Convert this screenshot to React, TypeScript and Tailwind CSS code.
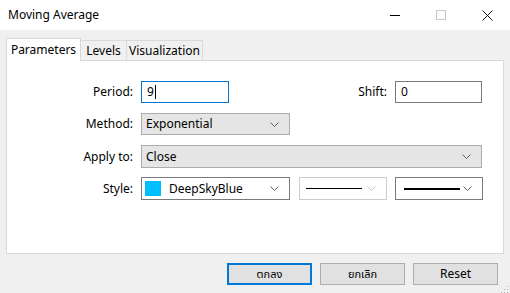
import React from "react";

const font = { fontFamily: '"Segoe UI", "Noto Sans", "Noto Sans Thai", "Liberation Sans", sans-serif' };

function Chevron({ light = false }: { light?: boolean }) {
  return (
    <svg width="9" height="5" viewBox="0 0 9 5" className="shrink-0">
      <path d="M0.5 0.5 L4.5 4.5 L8.5 0.5" fill="none" stroke={light ? "#c4c4c4" : "#606060"} strokeWidth="1" />
    </svg>
  );
}

function Label({ text, w }: { text: string; w: string }) {
  return <div className={`${w} shrink-0 text-right pr-[8px]`}>{text}</div>;
}

export default function App() {
  return (
    <div style={font} className="w-[510px] h-[293px] flex flex-col bg-[#f0f0f0] text-[12px] text-black overflow-hidden">
      {/* title bar */}
      <div className="h-[30px] bg-white flex items-center justify-between shrink-0">
        <span className="pl-[8px] text-[12px]">Moving Average</span>
        <div className="flex items-center h-full">
          <div className="w-[46px] h-full flex items-center justify-center">
            <div className="w-[10px] h-px bg-black" />
          </div>
          <div className="w-[46px] h-full flex items-center justify-center">
            <div className="w-[10px] h-[10px] border border-[#c8c8c8]" />
          </div>
          <div className="w-[46px] h-full flex items-center justify-center">
            <svg width="11" height="11" viewBox="0 0 11 11">
              <path d="M0.5 0.5 L10.5 10.5 M10.5 0.5 L0.5 10.5" stroke="#111" strokeWidth="1" />
            </svg>
          </div>
        </div>
      </div>

      {/* tabs */}
      <div className="pl-[6px] pt-[8px] flex items-end h-[30px] shrink-0">
        <div className="h-[23px] w-[75px] bg-white border border-b-0 border-[#d9d9d9] flex items-center justify-center relative z-10 -mb-px">
          Parameters
        </div>
        <div className="h-[20px] w-[46px] bg-[#f0f0f0] border border-b-0 border-l-0 border-[#d9d9d9] flex items-center justify-center">
          Levels
        </div>
        <div className="h-[20px] w-[76px] bg-[#f0f0f0] border border-b-0 border-l-0 border-[#d9d9d9] flex items-center justify-center">
          Visualization
        </div>
      </div>

      {/* panel */}
      <div className="ml-[6px] w-[498px] h-[194px] bg-white border border-[#d9d9d9] shrink-0 pt-[20px] flex flex-col gap-[10px]">
        <div className="flex items-center h-[22px]">
          <Label text="Period:" w="w-[134px]" />
          <div className="w-[88px] h-[22px] border border-[#0078d7] flex items-center pl-[5px]">
            9<span className="w-px h-[14px] bg-black ml-px" />
          </div>
          <Label text="Shift:" w="w-[166px]" />
          <div className="w-[87px] h-[22px] border border-[#7a7a7a] flex items-center pl-[5px]">0</div>
        </div>

        <div className="flex items-center h-[22px]">
          <Label text="Method:" w="w-[134px]" />
          <div className="w-[149px] h-[22px] bg-[#e5e5e5] border border-[#acacac] flex items-center justify-between pl-[4px] pr-[10px]">
            <span>Exponential</span>
            <Chevron />
          </div>
        </div>

        <div className="flex items-center h-[23px]">
          <Label text="Apply to:" w="w-[134px]" />
          <div className="w-[341px] h-[23px] bg-[#e5e5e5] border border-[#acacac] flex items-center justify-between pl-[4px] pr-[10px]">
            <span>Close</span>
            <Chevron />
          </div>
        </div>

        <div className="flex items-center h-[23px] -mt-px">
          <Label text="Style:" w="w-[134px]" />
          <div className="w-[149px] h-[23px] bg-white border border-[#7a7a7a] flex items-center pl-[3px] pr-[10px]">
            <div className="w-[16px] h-[15px] bg-[#00bfff]" />
            <span className="ml-[8px] flex-1">DeepSkyBlue</span>
            <Chevron />
          </div>
          <div className="ml-[9px] w-[88px] h-[23px] bg-white border border-[#cccccc] flex items-center pl-[6px] pr-[10px]">
            <div className="w-[56px] h-px bg-black" />
            <div className="flex-1" />
            <Chevron light />
          </div>
          <div className="ml-[8px] w-[88px] h-[23px] bg-white border border-[#7a7a7a] flex items-center pl-[8px] pr-[10px]">
            <div className="w-[56px] h-[2px] bg-black" />
            <div className="flex-1" />
            <Chevron />
          </div>
        </div>
      </div>

      {/* buttons */}
      <div className="flex justify-end gap-[8px] pr-[12px] pt-[9px] relative">
        <button className="w-[85px] h-[22px] bg-[#e1e1e1] border-2 border-[#0078d7] text-[11px]">ตกลง</button>
        <button className="w-[85px] h-[22px] bg-[#e1e1e1] border border-[#adadad] text-[11px]">ยกเลิก</button>
        <button className="w-[85px] h-[22px] bg-[#e1e1e1] border border-[#adadad]">Reset</button>
        <svg width="8" height="8" viewBox="0 0 8 8" className="absolute right-[1px] -bottom-[9px]">
          <rect x="6" y="0" width="1" height="1" fill="#b0b0b0" />
          <rect x="3" y="3" width="1" height="1" fill="#b0b0b0" />
          <rect x="6" y="3" width="1" height="1" fill="#b0b0b0" />
          <rect x="0" y="6" width="1" height="1" fill="#b0b0b0" />
          <rect x="3" y="6" width="1" height="1" fill="#b0b0b0" />
          <rect x="6" y="6" width="1" height="1" fill="#b0b0b0" />
        </svg>
      </div>
    </div>
  );
}
